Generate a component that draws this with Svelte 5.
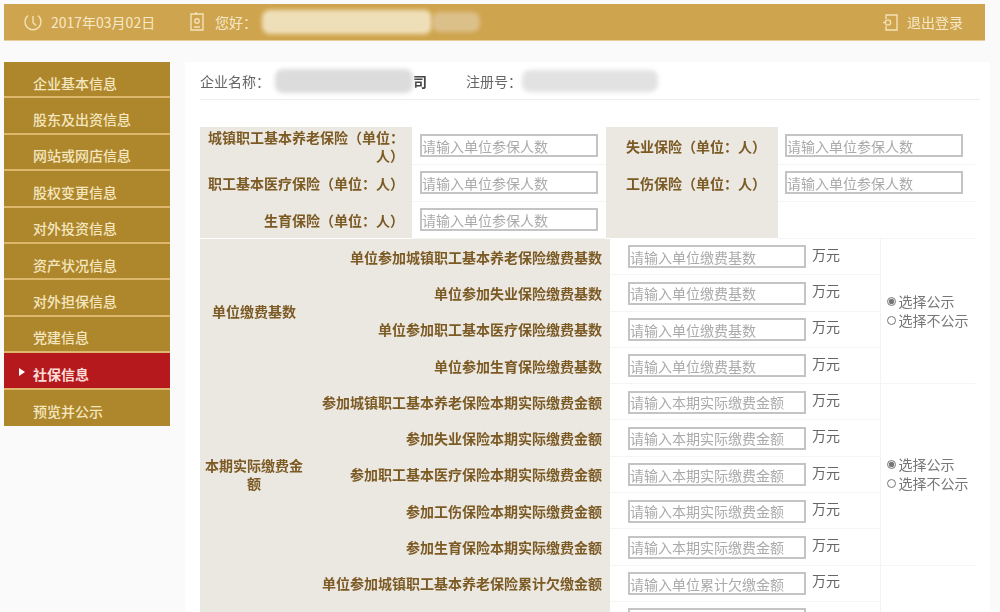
<script>
    let menu = [
        "企业基本信息",
        "股东及出资信息",
        "网站或网店信息",
        "股权变更信息",
        "对外投资信息",
        "资产状况信息",
        "对外担保信息",
        "党建信息",
        "社保信息",
        "预览并公示",
    ];
    let active = "社保信息";
    let base = "请输入单位缴费基数";
    let paid = "请输入本期实际缴费金额";
    let owed = "请输入单位累计欠缴金额";
    let groups = [
        {
            title: "单位缴费基数",
            rows: [
                ["单位参加城镇职工基本养老保险缴费基数", base],
                ["单位参加失业保险缴费基数", base],
                ["单位参加职工基本医疗保险缴费基数", base],
                ["单位参加生育保险缴费基数", base],
            ],
        },
        {
            title: "本期实际缴费金额",
            rows: [
                ["参加城镇职工基本养老保险本期实际缴费金额", paid],
                ["参加失业保险本期实际缴费金额", paid],
                ["参加职工基本医疗保险本期实际缴费金额", paid],
                ["参加工伤保险本期实际缴费金额", paid],
                ["参加生育保险本期实际缴费金额", paid],
            ],
        },
        {
            title: "",
            rows: [
                ["单位参加城镇职工基本养老保险累计欠缴金额", owed],
                ["", owed],
            ],
        },
    ];
</script>

<div class="page">
    <header>
        <svg class="ico" width="22" height="22" viewBox="0 0 22 22" fill="none" stroke="#f3e2b8" stroke-width="1.4">
            <path d="M6 4.5a8 8 0 1 0 10 0" />
            <path d="M11 5v6.5l3 3" />
        </svg>
        <span class="date">2017年03月02日</span>
        <svg class="ico user" width="16" height="22" viewBox="0 0 16 22" fill="none" stroke="#f3e2b8" stroke-width="1.4">
            <path d="M2 3h12v16H2z" />
            <circle cx="8" cy="10" r="2.2" />
            <path d="M5 16h6M7 1v3" />
        </svg>
        <span class="hello">您好：</span>
        <span class="blob top-a"></span>
        <span class="blob top-b"></span>
        <svg class="ico out" width="17" height="19" viewBox="0 0 17 19" fill="none" stroke="#f3e2b8" stroke-width="1.4">
            <path d="M4 6V2h11v15H4v-4" />
            <circle cx="6" cy="9.5" r="2.6" />
            <path d="M1 9.5h3" />
        </svg>
        <span>退出登录</span>
    </header>

    <div class="main">
        <nav>
            {#each menu as item}
                <a class:on={item == active} href="#top">{item}</a>
            {/each}
        </nav>

        <section>
            <div class="company">
                <span>企业名称：</span>
                <span class="blob name"></span>
                <span class="tail">司</span>
                <span class="reg">注册号：</span>
                <span class="blob num"></span>
            </div>

            <table class="people">
                <colgroup>
                    <col style="width:212px" />
                    <col style="width:194px" />
                    <col style="width:172px" />
                    <col style="width:197px" />
                </colgroup>
                <tbody>
                    <tr>
                        <th>城镇职工基本养老保险（单位：人）</th>
                        <td><input placeholder="请输入单位参保人数" /></td>
                        <th>失业保险（单位：人）</th>
                        <td><input placeholder="请输入单位参保人数" /></td>
                    </tr>
                    <tr>
                        <th>职工基本医疗保险（单位：人）</th>
                        <td><input placeholder="请输入单位参保人数" /></td>
                        <th>工伤保险（单位：人）</th>
                        <td><input placeholder="请输入单位参保人数" /></td>
                    </tr>
                    <tr>
                        <th>生育保险（单位：人）</th>
                        <td><input placeholder="请输入单位参保人数" /></td>
                        <th></th>
                        <td></td>
                    </tr>
                </tbody>
            </table>

            <table class="money">
                <colgroup>
                    <col style="width:108px" />
                    <col style="width:302px" />
                    <col style="width:270px" />
                    <col style="width:95px" />
                </colgroup>
                <tbody>
                    {#each groups as g, n}
                        {#each g.rows as row, i}
                            <tr>
                                {#if i == 0}
                                    <th class="title" rowspan={g.rows.length}>{g.title}</th>
                                {/if}
                                <th>{row[0]}</th>
                                <td class="val">
                                    <input placeholder={row[1]} /><span class="unit">万元</span>
                                </td>
                                {#if i == 0}
                                    <td class="pick" rowspan={g.rows.length}>
                                        {#if g.title}
                                            <label><input type="radio" name={"pub" + n} checked />选择公示</label>
                                            <label><input type="radio" name={"pub" + n} />选择不公示</label>
                                        {/if}
                                    </td>
                                {/if}
                            </tr>
                        {/each}
                    {/each}
                </tbody>
            </table>
        </section>
    </div>
</div>

<style>
    :global(body) {
        background: #fafafa;
    }

    .page {
        height: 612px;
        overflow: hidden;
        box-sizing: border-box;
        padding-top: 4px;
        font-family: "Noto Sans CJK SC", "Liberation Sans", sans-serif;
        font-size: 14px;
        filter: blur(0.7px);
    }

    header {
        width: 981px;
        height: 37px;
        margin-left: 4px;
        box-sizing: border-box;
        padding: 0 22px 0 18px;
        display: flex;
        align-items: center;
        background: #cfa44e;
        color: #f6e9c8;
        border-bottom: 1px solid #e6cf9b;
    }

    .ico {
        flex: none;
    }

    .date {
        margin-left: 7px;
        width: 132px;
    }

    .user {
        margin-left: 6px;
    }

    .hello {
        margin-left: 10px;
        width: 47px;
    }

    .blob {
        display: block;
        flex: none;
        filter: blur(2px);
        border-radius: 8px;
    }

    .top-a {
        width: 170px;
        height: 24px;
        background: #efdfb9;
    }

    .top-b {
        width: 48px;
        height: 20px;
        background: #dcc08a;
        margin-right: 402px;
    }

    .out {
        margin-right: 8px;
    }

    .main {
        display: flex;
        gap: 15px;
        margin: 21px 0 0 4px;
    }

    nav {
        width: 166px;
        flex: none;
        display: flex;
        flex-direction: column;
        align-self: flex-start;
    }

    nav a {
        height: 36.4px;
        box-sizing: border-box;
        padding: 7px 0 0 29px;
        display: flex;
        align-items: center;
        position: relative;
        background: #ae862c;
        border-bottom: 2px solid #dcb76c;
        color: #f4e6bf;
        font-weight: 500;
        text-decoration: none;
    }

    nav a:last-child {
        border-bottom: 0;
    }

    nav a.on {
        background: #b5191d;
        color: #fbdcd8;
        font-weight: 700;
    }

    nav a.on::before {
        content: "";
        position: absolute;
        left: 15px;
        top: 15px;
        border-left: 6px solid #fff;
        border-top: 4.5px solid transparent;
        border-bottom: 4.5px solid transparent;
    }

    section {
        width: 805px;
        flex: none;
        box-sizing: border-box;
        padding: 0 10px 0 15px;
        background: #fff;
    }

    .company {
        height: 37px;
        display: flex;
        align-items: center;
        border-bottom: 1px solid #eee;
        color: #666;
    }

    .name {
        width: 138px;
        height: 24px;
        margin-left: 5px;
        background: #dcdcdc;
    }

    .tail {
        color: #444;
        font-weight: 700;
    }

    .reg {
        margin-left: 39px;
    }

    .num {
        width: 136px;
        height: 22px;
        background: #e2e2e2;
    }

    table {
        width: 775px;
        border-collapse: collapse;
        table-layout: fixed;
    }

    .people {
        margin-top: 27px;
    }

    .people tr {
        height: 37px;
    }

    .money tr {
        height: 36.3px;
    }

    th {
        background: #ebe7e1;
        color: #7b5a24;
        font-weight: 700;
        text-align: right;
        line-height: 18px;
        padding: 0 8px 0 4px;
    }

    .people th:nth-child(3) {
        padding-right: 12px;
    }

    td {
        padding: 0;
        border-bottom: 1px solid #f5f5f5;
    }

    .people td:nth-child(2) {
        padding-left: 8px;
    }

    .people td:nth-child(4) {
        padding-left: 7px;
    }

    th.title {
        text-align: center;
        padding: 0 4px;
    }

    .val {
        padding-left: 18px;
        white-space: nowrap;
    }

    input:not([type]) {
        width: 178px;
        height: 23px;
        box-sizing: border-box;
        padding: 0;
        border: 2px solid #c4c4c4;
        background: #fff;
        font: inherit;
        vertical-align: middle;
    }

    input::placeholder {
        color: #aaa;
    }

    .unit {
        margin-left: 6px;
        color: #666;
        position: relative;
        top: -1px;
    }

    .pick {
        padding-left: 6px;
        color: #777;
        border-left: 1px solid #f3f3f3;
    }

    .pick label {
        display: flex;
        align-items: center;
        line-height: 19px;
        white-space: nowrap;
    }

    input[type="radio"] {
        width: 9px;
        height: 9px;
        margin: 0 3px 0 0;
        accent-color: #777;
    }
</style>
